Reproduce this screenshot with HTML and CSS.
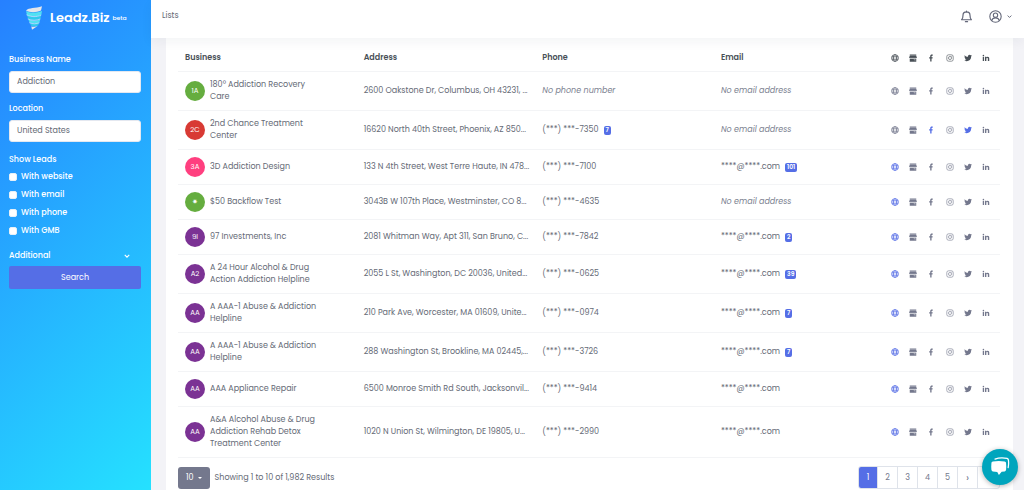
FILE: index.html
```html
<!DOCTYPE html>
<html lang="en">
<head>
<meta charset="utf-8">
<title>Leadz.Biz - Lists</title>
<link rel="stylesheet" href="styles.css">
</head>
<body>
<svg class="sprite" aria-hidden="true">
  <symbol id="globe" viewBox="0 0 16 16"><g fill="none" stroke="currentColor" stroke-width="1.5"><circle cx="8" cy="8" r="6.8"/><ellipse cx="8" cy="8" rx="3.2" ry="6.8"/><path d="M1.5 5.6h13M1.5 10.4h13"/></g></symbol>
  <symbol id="store" viewBox="0 0 16 16"><path fill="currentColor" d="M1.500 1h13v2.500h-13zM1.300 4h13.400L15.800 8H.2zM1.500 8.800h13V15.500h-13z"/><path d="M1.500 8.400h13M9.500 11h3.500M11 13.400h2" stroke="#fff" stroke-opacity=".7" stroke-width="1"/></symbol>
  <symbol id="facebook" viewBox="0 0 16 16"><path fill="currentColor" d="M6.4 15V8.8H4.3V6.3h2.1V4.4C6.4 2.2 7.7 1 9.7 1c.9 0 1.8.2 1.8.2v2.1h-1c-1 0-1.400.6-1.400 1.300v1.700h2.300l-.4 2.500H9.100V15z"/></symbol>
  <symbol id="instagram" viewBox="0 0 16 16"><g fill="none" stroke="currentColor" stroke-width="1.2"><rect x="1.600" y="1.600" width="12.800" height="12.800" rx="3.500"/><circle cx="8" cy="8" r="3.100"/></g><circle cx="11.700" cy="4.300" r=".9" fill="currentColor"/></symbol>
  <symbol id="twitter" viewBox="0 0 16 16"><path fill="currentColor" d="M14.400 4.700c.6-.4 1.100-.9 1.500-1.500-.6.3-1.200.4-1.800.5.7-.4 1.100-1 1.400-1.700-.6.3-1.300.6-2 .7a3.200 3.200 0 0 0-5.500 2.900C5.300 5.500 3 4.200 1.400 2.300c-.9 1.500-.4 3.300 1 4.200-.5 0-1-.2-1.400-.4 0 1.600 1.100 2.900 2.500 3.200-.5.100-1 .1-1.400 0 .4 1.300 1.600 2.200 3 2.200A6.500 6.500 0 0 1 .3 12.900c6.400 4 14.300-.3 14.100-8.200z"/></symbol>
  <symbol id="linkedin" viewBox="0 0 16 16"><path fill="currentColor" d="M1.500 5.600h2.700V14H1.500zM6 5.600h2.600v1.200c.5-.8 1.400-1.400 2.600-1.400 2.700 0 3.300 1.800 3.300 4.100V14h-2.800v-4c0-1 0-2.200-1.400-2.200S8.700 8.900 8.700 10v4H6z"/><circle cx="2.850" cy="3" r="1.600" fill="currentColor"/></symbol>
  <symbol id="chevron" viewBox="0 0 16 16"><path fill="none" stroke="currentColor" stroke-width="3" d="M2 5l6 6 6-6"/></symbol>
</svg>

<div class="app">
  <aside class="sidebar">
    <div class="brand">
      <svg class="brand-mark" viewBox="0 0 18 24" aria-hidden="true">
        <path fill="#e4e6ea" d="M1 4.500C4 1.500 10 2.500 17 .3L16 4.500C11 7 4 6.500 1 4.500z"/>
        <path fill="#52e0f2" d="M1 5c4 2.300 10 2 16 0l-.7 3.800c-5 2-10 2-14.300.2z"/>
        <path fill="#30c9ec" d="M2 9.500c4.500 2 9.500 1.700 14.200 0l-.8 3.200c-4 1.700-8.500 1.800-12.200.1z"/>
        <path fill="#52e0f2" d="M3.300 13.500c3.700 1.600 7.700 1.500 12-.1l-.9 2.900c-3 1.500-6.500 1.600-9.700.2z"/>
        <path fill="#30c9ec" d="M4.800 17.200c3 1.200 6.200 1.100 9.500-.2l-1.300 2.500c-2.300 1.100-4.600 1.100-6.900.2z"/>
        <path fill="#e4e6ea" d="M6.300 20.400c2.200.6 4.200.5 6.300-.4L7 23.800z"/>
        <path fill="none" stroke="#fff" stroke-width=".6" d="M1.500 8.800c5 2.400 10 2.300 14.700.3M2.800 12.900c4 1.900 8.500 1.800 12.500.1M4.300 16.700c3.400 1.500 7 1.400 10.100 0"/>
      </svg>
      <span class="brand-name">Leadz.Biz</span><span class="brand-tag">beta</span>
    </div>
    <form class="filters">
      <label class="caption" for="business">Business Name</label>
      <input class="field" id="business" type="text" value="Addiction">
      <label class="caption" for="location">Location</label>
      <input class="field" id="location" type="text" value="United States">
      <fieldset class="leads">
        <legend class="caption">Show Leads</legend>
        <label class="check"><input type="checkbox">With website</label>
        <label class="check"><input type="checkbox">With email</label>
        <label class="check"><input type="checkbox">With phone</label>
        <label class="check"><input type="checkbox">With GMB</label>
      </fieldset>
      <button class="additional" type="button">Additional<svg><use href="#chevron"/></svg></button>
      <button class="search" type="submit">Search</button>
    </form>
  </aside>

  <div class="main">
    <header class="topbar">
      <a class="toplink" href="#">Lists</a>
      <div class="tools">
        <button class="tool" type="button" aria-label="Notifications"><svg class="bell" viewBox="0 0 24 24"><path fill="none" stroke="currentColor" stroke-width="2.200" stroke-linejoin="round" stroke-linecap="round" d="M12 2v2M3 18h18c-2-2-2.500-4-2.500-8a6.500 6.500 0 0 0-13 0c0 4-.5 6-2.500 8zM10 21.500h4"/></svg></button>
        <button class="tool" type="button" aria-label="Account"><svg class="user" viewBox="0 0 24 24"><g fill="none" stroke="currentColor" stroke-width="2"><circle cx="12" cy="12" r="10.500"/><circle cx="12" cy="9.500" r="4"/><path d="M5 19.500c1-3.500 3.500-5 7-5s6 1.500 7 5"/></g></svg><svg class="caret"><use href="#chevron"/></svg></button>
      </div>
    </header>

    <main class="card">
      <table class="list">
        <thead>
          <tr><th>Business</th><th>Address</th><th>Phone</th><th>Email</th><th class="social"><div class="icons"><svg><use href="#globe"/></svg><svg><use href="#store"/></svg><svg><use href="#facebook"/></svg><svg><use href="#instagram"/></svg><svg><use href="#twitter"/></svg><svg><use href="#linkedin"/></svg></div></th></tr>
        </thead>
        <tbody>
          <tr><td><div class="biz"><span class="avatar green">1A</span><span>180° Addiction Recovery<br>Care</span></div></td><td>2600 Oakstone Dr, Columbus, OH 43231, ...</td><td><em>No phone number</em></td><td><em>No email address</em></td><td class="social"><div class="icons"><svg><use href="#globe"/></svg><svg><use href="#store"/></svg><svg><use href="#facebook"/></svg><svg><use href="#instagram"/></svg><svg><use href="#twitter"/></svg><svg><use href="#linkedin"/></svg></div></td></tr>
          <tr><td><div class="biz"><span class="avatar red">2C</span><span>2nd Chance Treatment<br>Center</span></div></td><td>16620 North 40th Street, Phoenix, AZ 850...</td><td>(***) ***-7350<span class="badge">7</span></td><td><em>No email address</em></td><td class="social"><div class="icons"><svg><use href="#globe"/></svg><svg><use href="#store"/></svg><svg class="on"><use href="#facebook"/></svg><svg><use href="#instagram"/></svg><svg class="on"><use href="#twitter"/></svg><svg><use href="#linkedin"/></svg></div></td></tr>
          <tr><td><div class="biz"><span class="avatar pink">3A</span><span>3D Addiction Design</span></div></td><td>133 N 4th Street, West Terre Haute, IN 478...</td><td>(***) ***-7100</td><td>****@****.com<span class="badge">101</span></td><td class="social"><div class="icons"><svg class="on"><use href="#globe"/></svg><svg><use href="#store"/></svg><svg><use href="#facebook"/></svg><svg><use href="#instagram"/></svg><svg><use href="#twitter"/></svg><svg><use href="#linkedin"/></svg></div></td></tr>
          <tr><td><div class="biz"><span class="avatar green">✷</span><span>$50 Backflow Test</span></div></td><td>3043B W 107th Place, Westminster, CO 8...</td><td>(***) ***-4635</td><td><em>No email address</em></td><td class="social"><div class="icons"><svg class="on"><use href="#globe"/></svg><svg><use href="#store"/></svg><svg><use href="#facebook"/></svg><svg><use href="#instagram"/></svg><svg><use href="#twitter"/></svg><svg><use href="#linkedin"/></svg></div></td></tr>
          <tr><td><div class="biz"><span class="avatar purple">9I</span><span>97 Investments, Inc</span></div></td><td>2081 Whitman Way, Apt 311, San Bruno, C...</td><td>(***) ***-7842</td><td>****@****.com<span class="badge">2</span></td><td class="social"><div class="icons"><svg class="on"><use href="#globe"/></svg><svg><use href="#store"/></svg><svg><use href="#facebook"/></svg><svg><use href="#instagram"/></svg><svg><use href="#twitter"/></svg><svg><use href="#linkedin"/></svg></div></td></tr>
          <tr><td><div class="biz"><span class="avatar purple">A2</span><span>A 24 Hour Alcohol &amp; Drug<br>Action Addiction Helpline</span></div></td><td>2055 L St, Washington, DC 20036, United...</td><td>(***) ***-0625</td><td>****@****.com<span class="badge">39</span></td><td class="social"><div class="icons"><svg class="on"><use href="#globe"/></svg><svg><use href="#store"/></svg><svg><use href="#facebook"/></svg><svg><use href="#instagram"/></svg><svg><use href="#twitter"/></svg><svg><use href="#linkedin"/></svg></div></td></tr>
          <tr><td><div class="biz"><span class="avatar purple">AA</span><span>A AAA-1 Abuse &amp; Addiction<br>Helpline</span></div></td><td>210 Park Ave, Worcester, MA 01609, Unite...</td><td>(***) ***-0974</td><td>****@****.com<span class="badge">7</span></td><td class="social"><div class="icons"><svg class="on"><use href="#globe"/></svg><svg><use href="#store"/></svg><svg><use href="#facebook"/></svg><svg><use href="#instagram"/></svg><svg><use href="#twitter"/></svg><svg><use href="#linkedin"/></svg></div></td></tr>
          <tr><td><div class="biz"><span class="avatar purple">AA</span><span>A AAA-1 Abuse &amp; Addiction<br>Helpline</span></div></td><td>288 Washington St, Brookline, MA 02445,...</td><td>(***) ***-3726</td><td>****@****.com<span class="badge">7</span></td><td class="social"><div class="icons"><svg class="on"><use href="#globe"/></svg><svg><use href="#store"/></svg><svg><use href="#facebook"/></svg><svg><use href="#instagram"/></svg><svg><use href="#twitter"/></svg><svg><use href="#linkedin"/></svg></div></td></tr>
          <tr><td><div class="biz"><span class="avatar purple">AA</span><span>AAA Appliance Repair</span></div></td><td>6500 Monroe Smith Rd South, Jacksonvil...</td><td>(***) ***-9414</td><td>****@****.com</td><td class="social"><div class="icons"><svg class="on"><use href="#globe"/></svg><svg><use href="#store"/></svg><svg><use href="#facebook"/></svg><svg><use href="#instagram"/></svg><svg><use href="#twitter"/></svg><svg><use href="#linkedin"/></svg></div></td></tr>
          <tr><td><div class="biz"><span class="avatar purple">AA</span><span>A&amp;A Alcohol Abuse &amp; Drug<br>Addiction Rehab Detox<br>Treatment Center</span></div></td><td>1020 N Union St, Wilmington, DE 19805, U...</td><td>(***) ***-2990</td><td>****@****.com</td><td class="social"><div class="icons"><svg class="on"><use href="#globe"/></svg><svg><use href="#store"/></svg><svg><use href="#facebook"/></svg><svg><use href="#instagram"/></svg><svg><use href="#twitter"/></svg><svg><use href="#linkedin"/></svg></div></td></tr>
        </tbody>
      </table>
      <footer class="pager">
        <button class="size" type="button">10<span class="down"></span></button>
        <span>Showing 1 to 10 of 1,982 Results</span>
        <nav class="pages" aria-label="Pages">
          <a class="current" href="#">1</a><a href="#">2</a><a href="#">3</a><a href="#">4</a><a href="#">5</a><a class="next" href="#" aria-label="Next">›</a><a class="last" href="#" aria-label="Last"></a>
        </nav>
      </footer>
    </main>
  </div>
</div>

<button class="chat" type="button" aria-label="Open chat">
  <svg viewBox="0 0 24 24"><path fill="none" stroke="#fff" stroke-width="1.500" stroke-linecap="round" d="M6 2.500c4-1.500 10-1.700 14.500-.8 1 .3 1.500 1 1.600 2 .4 3 .3 6-.3 9"/><path fill="#fff" d="M3.500 5.500c4.500-.8 9.500-.8 14 0 1 .2 1.700.9 1.800 1.900.3 3 .3 5.500 0 8-.1 1-.8 1.700-1.800 1.900l-3.500.4-3.300 4-2-3.800-5.200-.6c-1-.2-1.700-.9-1.800-1.900-.3-2.500-.3-5 0-8 .1-1 .8-1.700 1.800-1.900z"/></svg>
</button>
</body>
</html>
```
FILE: styles.css
```css
* { box-sizing: border-box; }
body {
  margin: 0;
  background: #f3f3f7;
  color: #656a76;
  font: 8px/12px Poppins, Inter, sans-serif;
}
button, input { font: inherit; }
button { border: 0; padding: 0; background: none; color: inherit; cursor: pointer; }
a { color: inherit; text-decoration: none; }
.sprite { position: absolute; width: 0; height: 0; }
.app { display: flex; height: 100vh; overflow: hidden; }

.sidebar {
  flex: 0 0 151px;
  padding: 6px 10px 0 9px;
  background: linear-gradient(135deg, #2680ff, #25e1ff);
  color: #fff;
}
.brand { display: flex; align-items: center; height: 24px; padding-left: 16px; }
.brand-mark { width: 18px; height: 24px; }
.brand-name { margin: 0 3px 0 7px; font-size: 13px; font-weight: 600; }
.brand-tag { font-size: 6px; font-weight: 500; }
.filters { display: flex; flex-direction: column; padding-top: 24px; }
.caption { padding: 0; font-weight: 500; }
.field {
  width: 100%;
  height: 22px;
  margin: 5px 0 10px;
  padding: 0 7px;
  border: 1px solid #e4e8f0;
  border-radius: 3px;
  background: #fff;
  color: #656a76;
}
.leads { display: flex; flex-direction: column; gap: 6px; margin: 2px 0 0; padding: 5px 0 0; border: 0; min-width: 0; }
.check { display: flex; align-items: center; gap: 4px; font-weight: 500; }
.check input {
  appearance: none;
  width: 8px;
  height: 8px;
  margin: 0;
  border: 1px solid #e6f0f8;
  border-radius: 2px;
  background: #fff;
}
.additional {
  display: flex;
  justify-content: space-between;
  align-items: center;
  margin: 13px 11px 4px 0;
  font-weight: 500;
}
.additional svg { width: 6px; height: 6px; }
.search { height: 23px; border-radius: 2px; background: #556ee6; font-weight: 400; }

.main { flex: 1; min-width: 0; display: flex; flex-direction: column; }
.topbar {
  position: relative;
  flex: none;
  display: flex;
  justify-content: space-between;
  align-items: center;
  height: 38px;
  padding: 0 12px 6px 11px;
  background: #fff;
  box-shadow: 0 4px 12px rgba(18, 38, 63, .05);
}
.tools { display: flex; gap: 16px; }
.tool { display: flex; align-items: center; gap: 5px; color: #626678; }
.bell { width: 13px; height: 13px; }
.user { width: 13px; height: 13px; }
.caret { width: 5px; height: 5px; }

.card { flex: 1 0 auto; margin: 0 11px 0 15px; padding: 7px 13px 0 12px; background: #fff; }
.list { width: 100%; table-layout: fixed; border-collapse: separate; border-spacing: 0; }
.list th, .list td { padding: 7px 0 7px 7px; border-bottom: 1px solid #f3f4f6; text-align: left; white-space: nowrap; }
.list th { color: #495057; font-weight: 600; }
.list th:nth-child(-n+3) { width: calc(65.2% / 3); }
.list .social { width: 114px; padding: 0 5px 0 0; }
.list em { color: #7b8190; }
.biz { display: flex; align-items: center; gap: 5px; }
.avatar {
  flex: none;
  width: 20px;
  height: 20px;
  border-radius: 50%;
  color: #fff;
  font-size: 7px;
  line-height: 20px;
  text-align: center;
}
.green { background: #65ad3f; }
.red { background: #d83a34; }
.pink { background: #ff3f7f; }
.purple { background: #7b3294; }
.icons { display: grid; grid-template-columns: repeat(6, 1fr); justify-items: center; color: #74788d; }
.list th .icons { color: #495057; }
.icons svg { width: 8px; height: 8px; }
.icons .on { color: #556ee6; }
.badge {
  display: inline-block;
  margin-left: 5px;
  padding: 0 2px;
  border-radius: 2px;
  background: #556ee6;
  color: #fff;
  font-size: 6px;
  font-weight: 600;
  line-height: 9px;
}

.pager { display: flex; align-items: center; gap: 5px; padding-top: 8px; }
.size {
  display: flex;
  align-items: center;
  gap: 4px;
  height: 22px;
  padding: 0 8px;
  border-radius: 3px;
  background: #74788d;
  color: #fff;
}
.down { border: 2px solid transparent; border-top-color: #fff; border-bottom: 0; }
.pages { display: flex; margin-left: auto; border: 1px solid #dfe3ea; border-radius: 3px; color: #74788d; }
.pages a { width: 20px; height: 21px; border-left: 1px solid #dfe3ea; line-height: 21px; text-align: center; }
.pages .current { width: 18px; border: 0; border-radius: 2px 0 0 2px; background: #556ee6; color: #fff; }
.pages .next { font-size: 11px; }
.pages .last { width: 22px; }

.chat {
  position: fixed;
  right: 6px;
  bottom: 5px;
  display: grid;
  place-items: center;
  width: 36px;
  height: 36px;
  border-radius: 50%;
  background: #00a5bd;
  box-shadow: 0 1px 5px rgba(0, 0, 0, .3);
}
.chat svg { width: 20px; height: 20px; }
```
